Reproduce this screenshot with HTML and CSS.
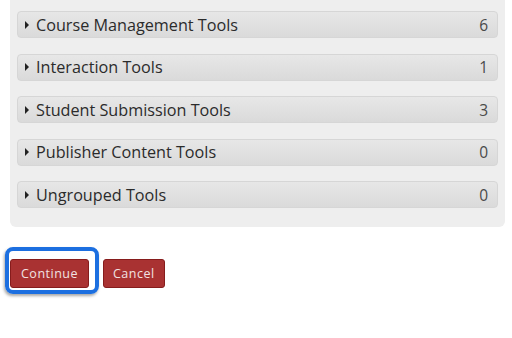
FILE: index.html
```html
<html>
<head>
    <title>Tool Groups</title>
    <meta charset="utf-8" name="viewport" content="width=device-width, initial-scale=1.0" />
    <link rel="stylesheet" href="styles.css">
</head>
<body>
    <div class="tool-panel">
        <div class="tool-group">
            <span class="caret"></span>
            <span class="group-name">Course Management Tools</span>
            <span class="group-count">6</span>
        </div>
        <div class="tool-group">
            <span class="caret"></span>
            <span class="group-name">Interaction Tools</span>
            <span class="group-count">1</span>
        </div>
        <div class="tool-group">
            <span class="caret"></span>
            <span class="group-name">Student Submission Tools</span>
            <span class="group-count">3</span>
        </div>
        <div class="tool-group">
            <span class="caret"></span>
            <span class="group-name">Publisher Content Tools</span>
            <span class="group-count">0</span>
        </div>
        <div class="tool-group">
            <span class="caret"></span>
            <span class="group-name">Ungrouped Tools</span>
            <span class="group-count">0</span>
        </div>
    </div>

    <div class="actions">
        <div class="highlight-wrap">
            <button type="button" class="btn">Continue</button>
            <!-- annotation ring from the help guide -->
            <span class="highlight"></span>
        </div>
        <button type="button" class="btn">Cancel</button>
    </div>
</body>
</html>
```

FILE: styles.css
```css
/* Reset some default styles to start fresh */
body, button {
    margin: 0;
    padding: 0;
}

body {
    font-family: "Open Sans", Arial, sans-serif;
    background-color: #fff;
    color: #333;
}

.tool-panel {
    width: 495px;
    margin-left: 10px;
    padding: 11px 0 19px;
    box-sizing: border-box;
    background-color: #eeeeee;
    border-radius: 0 0 6px 6px;
    display: flex;
    flex-direction: column;
    gap: 15.5px;
}

.tool-group {
    height: 27px;
    margin: 0 7px;
    padding: 0 9px 0 7px;
    box-sizing: border-box;
    display: flex;
    align-items: center;
    background: linear-gradient(#e7e7e7, #dadada);
    border: 1px solid #d6d6d6;
    border-radius: 4px;
    font-size: 16.2px;
    color: #2b2b2b;
}

.caret {
    width: 0;
    height: 0;
    border-top: 4px solid transparent;
    border-bottom: 4px solid transparent;
    border-left: 4px solid #222;
    margin-right: 7px;
}

.group-name {
    flex: 1;
}

.group-count {
    color: #4a4a4a;
    font-size: 15.5px;
}

.actions {
    display: flex;
    gap: 14px;
    margin: 32px 0 0 10px;
}

.highlight-wrap {
    position: relative;
}

.btn {
    height: 29px;
    padding: 0 9px;
    background-color: #a93232;
    border: 1px solid #861c1c;
    border-radius: 3px;
    color: #f1e2e2;
    font-family: "Open Sans", Arial, sans-serif;
    font-size: 12.5px;
    letter-spacing: 0.5px;
    cursor: pointer;
}

.highlight-wrap .btn {
    width: 79px;
}

.highlight {
    position: absolute;
    left: -5px;
    top: -12px;
    width: 94px;
    height: 47px;
    box-sizing: border-box;
    border: 4px solid #1c6fe0;
    border-radius: 8px;
    box-shadow: -1px 2px 3px rgba(0, 0, 0, 0.35);
}
```
